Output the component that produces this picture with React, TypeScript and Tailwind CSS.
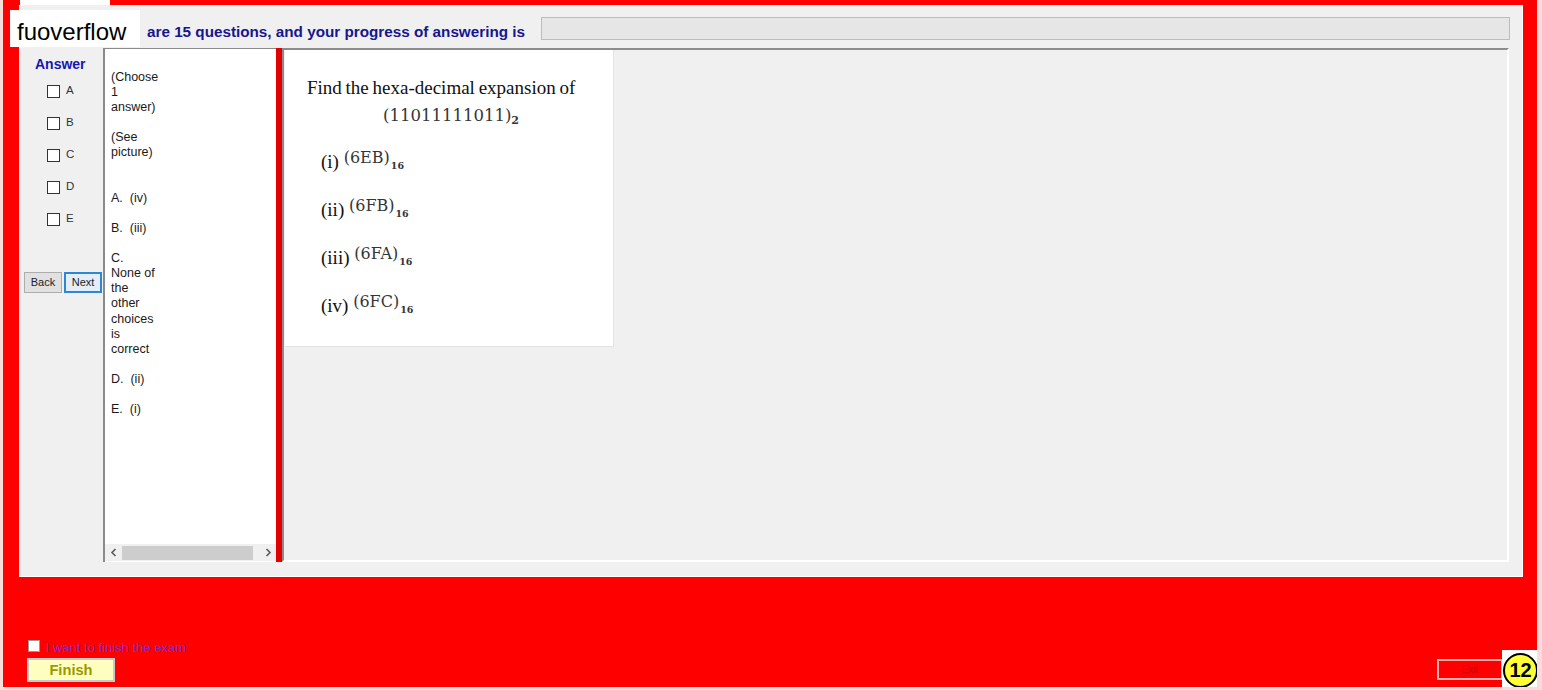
import React from "react";

const letters = ["A", "B", "C", "D", "E"];
const items: [string, string][] = [
  ["(i)", "(6EB)"],
  ["(ii)", "(6FB)"],
  ["(iii)", "(6FA)"],
  ["(iv)", "(6FC)"],
];

const leftText =
  "(Choose\n1\nanswer)\n\n(See\npicture)\n\n\nA.  (iv)\n\nB.  (iii)\n\nC.\nNone of\nthe\nother\nchoices\nis\ncorrect\n\nD.  (ii)\n\nE.  (i)";

function Chevron({ dir }: { dir: "left" | "right" }) {
  return (
    <svg width="8" height="9" viewBox="0 0 8 9">
      {dir === "left" ? (
        <polyline points="5.5,1 2,4.5 5.5,8" fill="none" stroke="#5a5a5a" strokeWidth="1.6" />
      ) : (
        <polyline points="2.5,1 6,4.5 2.5,8" fill="none" stroke="#5a5a5a" strokeWidth="1.6" />
      )}
    </svg>
  );
}

export default function App() {
  return (
    <div className="relative w-[1542px] h-[690px] overflow-hidden bg-[#ff0000] border-l-[3px] border-r-[5px] border-b-[3px] border-[#f7dcdc] flex flex-col font-['Liberation_Sans',Arial,sans-serif]">
      {/* tab stub */}
      <div className="h-[5px] flex">
        <div className="ml-[17px] w-[90px] bg-white" />
      </div>

      {/* main panel */}
      <div className="ml-[16px] w-[1504px] h-[572px] bg-[#f0f0f0] border-r border-b border-white flex flex-col">
        {/* header */}
        <div className="h-[43px] flex items-start">
          <div className="w-[522px] pl-[128px] pt-[17.5px] text-[15.25px] leading-[18px] font-bold text-[#16168f] whitespace-nowrap">
            are 15 questions, and your progress of answering is
          </div>
          <div className="mt-[12px] w-[969px] h-[23px] bg-[#e6e6e6] border border-[#bcbcbc]" />
        </div>

        {/* content */}
        <div className="h-[514px] flex">
          {/* answer column */}
          <div className="w-[84px] flex flex-col">
            <div className="mt-[7.5px] ml-[16px] text-[14px] leading-[16px] font-bold text-[#1616b2]">Answer</div>
            <div className="mt-[3.5px] flex flex-col">
              {letters.map((l) => (
                <div key={l} className="h-[32px] flex items-center pl-[28px] gap-[6px]">
                  <span className="w-[13px] h-[13px] bg-white border border-[#333333]" />
                  <span className="text-[11.5px] leading-[12px] text-[#333333] -mt-[2px]">{l}</span>
                </div>
              ))}
            </div>
            <div className="mt-[37px] ml-[5px] flex gap-[2px]">
              <div className="w-[38px] h-[21px] bg-[#e1e1e1] border border-[#adadad] flex items-center justify-center text-[11px] text-[#222222]">
                Back
              </div>
              <div className="w-[38px] h-[21px] bg-[#e3eef8] border-2 border-[#2f86d2] flex items-center justify-center text-[11px] text-[#222222]">
                Next
              </div>
            </div>
          </div>

          {/* text panel */}
          <div className="w-[173px] bg-white border-l-2 border-t border-[#8a8a8a] flex flex-col">
            <div className="flex-1 pl-[6px] pt-[21px] whitespace-pre text-[12.5px] leading-[15.09px] text-[#1a1a1a]">
              {leftText}
            </div>
            <div className="h-[17px] mb-[1px] bg-[#f0f0f0] flex items-center">
              <div className="w-[17px] h-[17px] flex items-center justify-center">
                <Chevron dir="left" />
              </div>
              <div className="w-[131px] h-[14px] bg-[#cdcdcd]" />
              <div className="w-[6px]" />
              <div className="w-[17px] h-[17px] flex items-center justify-center">
                <Chevron dir="right" />
              </div>
            </div>
          </div>

          {/* splitter */}
          <div className="w-[6px] bg-[#e20000]" />

          {/* picture panel */}
          <div className="w-[1227px] border-2 border-t-[#8c8c8c] border-l-[#8c8c8c] border-r-white border-b-white">
            <div className="ml-[1px] w-[329px] h-[297px] bg-white border-r border-b border-[#e3e3e3] font-['Liberation_Serif','Times_New_Roman',serif] text-[#111111]">
              <div className="pt-[27px] pl-[22px] text-[19px] leading-[22px] whitespace-nowrap [word-spacing:-1px]">
                Find the hexa-decimal expansion of
              </div>
              <div className="mt-[7px] pl-[98px] h-[20px] leading-[20px] font-['DejaVu_Serif',serif] text-[16.5px] text-[#353535] whitespace-nowrap">
                (11011111011)
                <span className="text-[11px] leading-none align-[-3px] font-bold">2</span>
              </div>
              <div className="mt-[11.5px] flex flex-col">
                {items.map(([r, v]) => (
                  <div key={r} className="h-[48.3px] leading-[48px] pl-[36px] text-[19px] whitespace-nowrap">
                    {r}{" "}
                    <span className="font-['DejaVu_Serif',serif] text-[16px] text-[#353535] leading-none align-[5px]">{v}</span>
                    <span className="font-['DejaVu_Serif',serif] font-bold text-[9.5px] text-[#353535] leading-none align-[-1px] ml-[1px]">16</span>
                  </div>
                ))}
              </div>
            </div>
          </div>

          <div className="flex-1" />
        </div>
      </div>

      {/* bottom area */}
      <div className="flex-1 flex flex-col">
        <div className="mt-[63px] pl-[25px] flex items-center gap-[6px] h-[12px]">
          <span className="w-[12px] h-[12px] bg-white border border-[#9a9a9a]" />
          <span className="mt-[4px] text-[13px] leading-[12px] text-[#7f2cc4] whitespace-nowrap">I want to finish the exam</span>
        </div>
        <div className="mt-[6px] flex items-start">
          <div className="ml-[24px] w-[88px] h-[24px] bg-[#ffffc0] border-2 border-[#c8c8c8] flex items-center justify-center text-[14.67px] font-bold text-[#999900]">
            Finish
          </div>
          <div className="ml-auto mr-[34px] mt-[1px] w-[66px] h-[21px] border-2 border-[#ffb0b0] flex items-center justify-center text-[10px] text-[#c00000]">
            Exit
          </div>
        </div>
      </div>

      {/* watermark */}
      <div className="absolute left-[7px] top-[10px] w-[130px] h-[37px] bg-white pl-[7px] pt-[7.5px] text-[24px] leading-[27px] text-black">
        fuoverflow
      </div>

      {/* badge */}
      <div className="absolute right-[-5px] bottom-[-3px] w-[40px] h-[40px] bg-white flex items-center justify-center">
        <div className="w-[35px] h-[35px] rounded-full bg-[#ffff38] border-2 border-black flex items-center justify-center text-[20px] font-bold leading-none text-black -ml-[3px]">
          12
        </div>
      </div>
    </div>
  );
}
